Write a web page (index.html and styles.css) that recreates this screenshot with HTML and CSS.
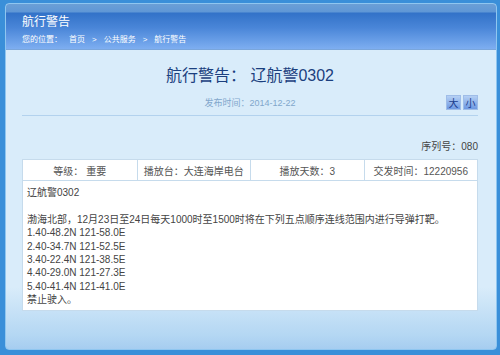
FILE: index.html
```html
<!DOCTYPE html>
<html lang="zh-CN">
<head>
    <meta charset="UTF-8">
    <title>航行警告</title>
    <link rel="stylesheet" href="styles.css">
</head>
<body>
    <div class="window">
        <div class="header">
            <div class="header-title">航行警告</div>
            <div class="crumbs">
                <span>您的位置：</span>
                <span class="crumb">首页</span>
                <span class="sep">&gt;</span>
                <span>公共服务</span>
                <span class="sep">&gt;</span>
                <span>航行警告</span>
            </div>
        </div>

        <div class="content">
            <h1 class="headline">航行警告： 辽航警0302</h1>

            <div class="meta">
                <div></div>
                <div class="pub-date">发布时间：2014-12-22</div>
                <div class="size-buttons">
                    <span class="size-btn">大</span>
                    <span class="size-btn">小</span>
                </div>
            </div>

            <div class="serial">序列号：080</div>

            <div class="info-table">
                <div class="info-cell">等级：&nbsp;重要</div>
                <div class="info-cell">播放台：大连海岸电台</div>
                <div class="info-cell">播放天数：3</div>
                <div class="info-cell">交发时间：12220956</div>
            </div>

            <div class="notice">
                <p>辽航警0302</p>
                <p class="gap">渤海北部，12月23日至24日每天1000时至1500时将在下列五点顺序连线范围内进行导弹打靶。</p>
                <p>1.40-48.2N 121-58.0E</p>
                <p>2.40-34.7N 121-52.5E</p>
                <p>3.40-22.4N 121-38.5E</p>
                <p>4.40-29.0N 121-27.3E</p>
                <p>5.40-41.4N 121-41.0E</p>
                <p>禁止驶入。</p>
            </div>
        </div>
    </div>
</body>
</html>
```

FILE: styles.css
```css
html, body {
    height: 100%;
}

body {
    margin: 0;
    padding: 3px 3px 5px 5px;
    box-sizing: border-box;
    background: #3a8fd9;
    font-family: "Liberation Sans", "Noto Sans CJK SC", sans-serif;
    color: #444;
}

.window {
    height: 100%;
    box-sizing: border-box;
    border: 1px solid #8fc6f0;
    border-radius: 4px;
    overflow: hidden;
    display: flex;
    flex-direction: column;
    background: linear-gradient(to bottom, #d9ecfa 0%, #d9ecfa 82%, #b4d7f3 96%, #a6cdf0 100%);
}

.header {
    height: 46px;
    box-sizing: border-box;
    padding: 9px 0 0 16px;
    background: linear-gradient(to bottom, #6b9fd6 0px, #5f97d6 8px, #3272c8 9px, #4a86d8 24px, #80b0f2 46px);
    border-bottom: 1px solid #7aa6dc;
    color: #fff;
}

.header-title {
    font-size: 12px;
    line-height: 19px;
}

.crumbs {
    margin-top: 2px;
    font-size: 8px;
    line-height: 12px;
    display: flex;
    gap: 7px;
}

.content {
    flex: 1;
    padding: 0 18px 0 16px;
}

.headline {
    margin: 15px 0 0;
    text-align: center;
    font-size: 16px;
    line-height: 22px;
    font-weight: normal;
    color: #1b3f7e;
}

.meta {
    margin-top: 8px;
    display: grid;
    grid-template-columns: 1fr auto 1fr;
    align-items: center;
    padding-bottom: 5px;
    border-bottom: 1px solid #b3d2ee;
}

.pub-date {
    font-size: 9px;
    color: #82a7cc;
}

.size-buttons {
    display: flex;
    justify-content: flex-end;
    gap: 2px;
}

.size-btn {
    width: 15px;
    height: 15px;
    display: flex;
    align-items: center;
    justify-content: center;
    font-size: 10px;
    color: #1b3c8c;
    background: linear-gradient(to bottom, #b5d0f4, #6d98e2);
    border: 1px solid #9fbde8;
    box-sizing: border-box;
}

.serial {
    margin-top: 24px;
    text-align: right;
    font-size: 10px;
    line-height: 14px;
    color: #444;
}

.info-table {
    margin-top: 5px;
    display: grid;
    grid-template-columns: repeat(4, 1fr);
    background: #fff;
    border: 1px solid #c6dbec;
}

.info-cell {
    height: 20px;
    display: flex;
    align-items: center;
    justify-content: center;
    font-size: 10px;
    color: #555;
    border-left: 1px solid #c6dbec;
}

.info-cell:first-child {
    border-left: none;
}

.notice {
    background: #fff;
    border: 1px solid #c6dbec;
    border-top: none;
    padding: 5px 4px 3px;
    font-size: 10px;
    line-height: 13.4px;
    color: #444;
}

.notice p {
    margin: 0;
}

.notice .gap {
    margin-top: 13.4px;
}
```
